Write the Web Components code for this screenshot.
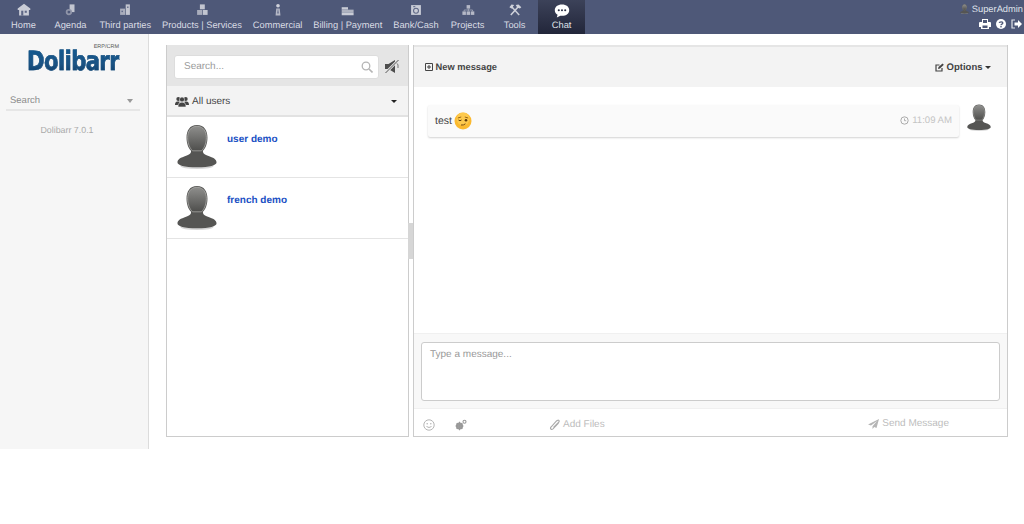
<!DOCTYPE html>
<html>
<head>
<meta charset="utf-8">
<title>Dolibarr chat</title>
<style>
  html, body { margin: 0; padding: 0; background: #fff; }
  body { font-family: "Liberation Sans", Arial, sans-serif; text-rendering: geometricPrecision; }
</style>
</head>
<body>
<dol-app></dol-app>

<script>
const ICONS = {
  home: '<path d="M10 1 L19 8 V10 H17 V18 H3 V10 H1 V8 Z" fill="#c9ccd6"/><rect x="6" y="11" width="3" height="7" fill="#5d6685"/><rect x="11" y="11" width="3" height="3" fill="#5d6685"/>',
  agenda: '<rect x="8" y="2" width="7" height="11" fill="#c2c5d0"/><circle cx="7" cy="13" r="4.5" fill="#8f94a8"/><circle cx="7" cy="13" r="2" fill="#4e5878"/>',
  third: '<rect x="11" y="2" width="6" height="15" fill="#c2c5d0"/><rect x="3" y="8" width="7" height="9" fill="#a9adbc"/><rect x="13" y="5" width="2" height="2" fill="#5d6685"/><rect x="5" y="11" width="2" height="2" fill="#5d6685"/>',
  products: '<rect x="7" y="2" width="7" height="7" fill="#c2c5d0"/><rect x="3" y="10" width="7" height="7" fill="#a9adbc"/><rect x="11" y="10" width="7" height="7" fill="#c2c5d0"/>',
  commercial: '<circle cx="10" cy="4" r="2.600" fill="#d0d2db"/><path d="M7.500 8 H12.500 L13.500 18 H6.500 Z" fill="#b5b8c6"/><path d="M10 8 L11 14 L10 16 L9 14 Z" fill="#5d6685"/>',
  billing: '<rect x="1" y="6" width="9" height="3.500" fill="#c9ccd6"/><rect x="1" y="9.500" width="9" height="4" fill="#aeb2c0"/><rect x="1" y="13.500" width="9" height="4" fill="#c9ccd6"/><rect x="10" y="9.500" width="8" height="4" fill="#aeb2c0"/><rect x="10" y="13.500" width="8" height="4" fill="#c9ccd6"/>',
  bank: '<rect x="3" y="3" width="14" height="14" fill="#c9ccd6"/><circle cx="10" cy="11" r="3.500" fill="none" stroke="#5d6685" stroke-width="1.500"/><rect x="6" y="4.500" width="3" height="1.500" fill="#5d6685"/>',
  projects: '<rect x="8" y="3" width="5" height="5" fill="#b5b8c6"/><rect x="2" y="12" width="5" height="5" fill="#b5b8c6"/><rect x="8" y="12" width="5" height="5" fill="#b5b8c6"/><rect x="14" y="12" width="5" height="5" fill="#b5b8c6"/><path d="M4.500 12 V10 H16.500 V12 M10.500 8 V12" fill="none" stroke="#b5b8c6"/>',
  tools: '<path d="M5 5 L16 17" stroke="#c9ccd6" stroke-width="2.200"/><path d="M2 6 L5 2 L9 3 L7 5 L7 8 L5 8 Z" fill="#d0d2db"/><path d="M4 17 L15 5" stroke="#d0d2db" stroke-width="2.200"/><path d="M11 3 L15 2 L19 6 L17 8 L15 7 L13 6 Z" fill="#d0d2db"/>',
  chat: '<path d="M11 2 C5.500 2 2 5 2 9 C2 11.500 3.500 13.500 5.500 14.600 L4.500 18 L9 15.800 C9.700 15.900 10.300 16 11 16 C16.500 16 20 13 20 9 C20 5 16.500 2 11 2 Z" fill="#fff"/><circle cx="7" cy="9" r="1.300" fill="#2b3044"/><circle cx="11" cy="9" r="1.300" fill="#2b3044"/><circle cx="15" cy="9" r="1.300" fill="#2b3044"/>'
};

class DolAvatar extends HTMLElement {
  connectedCallback() {
    const size = Number(this.getAttribute('size') || 44);
    this.attachShadow({ mode: 'open' }).innerHTML = `
      <style>:host { display: block; line-height: 0; }</style>
      <svg width="${size}" height="${size * 50 / 44}" viewBox="0 0 44 50">
        <defs>
          <linearGradient id="h" x1="0" y1="0" x2="0" y2="1">
            <stop offset="0" stop-color="#8e8e8c"/><stop offset="1" stop-color="#4e4e4c"/>
          </linearGradient>
        </defs>
        <ellipse cx="22" cy="46.500" rx="18" ry="3" fill="#bbb" opacity=".6"/>
        <path d="M22 1 C30 1 33.500 7 33.500 15 C33.500 22 31 27 28.500 29.500 C28.500 32.500 30 33.500 34 35 C40 37 43.500 39 43.500 42 C43.500 45.500 36 47.500 22 47.500 C8 47.500 .5 45.500 .5 42 C.5 39 4 37 10 35 C14 33.500 15.500 32.500 15.500 29.500 C13 27 10.500 22 10.500 15 C10.500 7 14 1 22 1 Z" fill="#555553"/>
        <path d="M22 2.500 C29 2.500 32.300 8 32.300 15 C32.300 22 29.500 27 27 29.500 L17 29.500 C14.500 27 11.700 22 11.700 15 C11.700 8 15 2.500 22 2.500 Z" fill="url(#h)" stroke="#b0b0ae" stroke-width=".8"/>
      </svg>`;
  }
}
customElements.define('dol-avatar', DolAvatar);

class NavItem extends HTMLElement {
  connectedCallback() {
    const icon = ICONS[this.getAttribute('icon')];
    const active = this.hasAttribute('active');
    this.attachShadow({ mode: 'open' }).innerHTML = `
      <style>
        :host { display: flex; flex-direction: column; align-items: center; box-sizing: border-box;
                height: 34px; min-width: 47px; padding: 3px 5.440px 0; color: #dadce4; font-size: 9.300px; }
        :host([active]) { background: linear-gradient(#3c4259, #22263a); color: #dfe1e8; }
        svg { display: block; margin-bottom: ${active ? 0 : 2}px; }
        span { line-height: 13px; white-space: nowrap; }
      </style>
      <svg width="${active ? 18 : 14}" height="${active ? 16 : 14}" viewBox="0 0 ${active ? 22 : 20} 20">${icon}</svg>
      <span><slot></slot></span>`;
  }
}
customElements.define('nav-item', NavItem);

class DolTopbar extends HTMLElement {
  constructor() {
    super();
    this.attachShadow({ mode: 'open' }).innerHTML = `
      <style>
        :host { display: flex; justify-content: space-between; height: 34px; background: #4e5878;
                font-family: "Liberation Sans", Arial, sans-serif; }
        nav { display: flex; }
        .user { display: flex; flex-direction: column; align-items: flex-end; padding: 3px 1px 0 0; color: #dfe1e8; font-size: 9.300px; }
        .name { display: flex; align-items: center; gap: 3px; line-height: 13px; }
        .tools { display: flex; gap: 5px; margin-top: 3px; padding-right: 1px; }
        svg { display: block; }
      </style>
      <nav>
        <nav-item icon="home">Home</nav-item>
        <nav-item icon="agenda">Agenda</nav-item>
        <nav-item icon="third">Third parties</nav-item>
        <nav-item icon="products">Products | Services</nav-item>
        <nav-item icon="commercial">Commercial</nav-item>
        <nav-item icon="billing">Billing | Payment</nav-item>
        <nav-item icon="bank">Bank/Cash</nav-item>
        <nav-item icon="projects">Projects</nav-item>
        <nav-item icon="tools">Tools</nav-item>
        <nav-item icon="chat" active>Chat</nav-item>
      </nav>
      <div class="user">
        <div class="name"><dol-avatar size="9"></dol-avatar>SuperAdmin</div>
        <div class="tools">
          <svg width="12" height="10" viewBox="0 0 12 10"><path d="M3 0 H9 V3 H11 A1 1 0 0 1 12 4 V8 H10 V10 H2 V8 H0 V4 A1 1 0 0 1 1 3 H3 Z M4 1 V4 H8 V1 Z M3.500 6.500 V9 H8.500 V6.500 Z" fill="#fff" fill-rule="evenodd"/></svg>
          <svg width="10" height="10" viewBox="0 0 10 10"><circle cx="5" cy="5" r="5" fill="#fff"/><path d="M3.200 3.800 C3.400 2.500 6.800 2.300 6.800 4 C6.800 5.200 5 5 5 6.200" fill="none" stroke="#4e5878" stroke-width="1.300"/><rect x="4.300" y="7" width="1.400" height="1.400" fill="#4e5878"/></svg>
          <svg width="11" height="10" viewBox="0 0 11 10"><path d="M4 1 H1 V9 H4" fill="none" stroke="#dfe1e8" stroke-width="1.200"/><path d="M3.500 3.500 H7 V1 L11 5 L7 9 V6.500 H3.500 Z" fill="#fff"/></svg>
        </div>
      </div>`;
  }
}
customElements.define('dol-topbar', DolTopbar);

class DolSidebar extends HTMLElement {
  constructor() {
    super();
    this.attachShadow({ mode: 'open' }).innerHTML = `
      <style>
        :host { display: block; box-sizing: border-box; width: 149px; background: #f6f6f6; border-right: 1px solid #dcdcdc;
                padding-top: 15px; font-family: "Liberation Sans", Arial, sans-serif; }
        .logo { position: relative; width: 92px; height: 24px; margin-left: 27px; }
        .word { display: block; width: max-content; font: 700 26.500px/25px "DejaVu Sans", sans-serif; letter-spacing: -.8px; white-space: nowrap;
                transform-origin: left top; transform: scaleX(.8);
                background: linear-gradient(#12588f, #1b5384 60%, #0f3d68); -webkit-background-clip: text; background-clip: text; color: transparent;
                -webkit-text-stroke: .5px #17507f; }
        .erp { position: absolute; right: 0; top: -5px; font-size: 5.500px; color: #555; }
        .search { display: flex; justify-content: space-between; align-items: center; margin: 19px 8px 0 6px;
                  padding: 0 4px; height: 17px; border-bottom: 2px solid #e6e6e6; font-size: 9.500px; color: #8c8c8c; }
        .caret { width: 0; height: 0; border: 3px solid transparent; border-top: 4px solid #999; border-bottom: 0; margin-right: 3px; }
        .version { margin-top: 14px; text-align: center; font-size: 8.850px; line-height: 11px; color: #aaa; padding-right: 14px; }
      </style>
      <div class="logo"><span class="word">Dolibarr</span><span class="erp">ERP/CRM</span></div>
      <div class="search"><span>Search</span><i class="caret"></i></div>
      <div class="version">Dolibarr 7.0.1</div>`;
  }
}
customElements.define('dol-sidebar', DolSidebar);

class UserRow extends HTMLElement {
  connectedCallback() {
    this.attachShadow({ mode: 'open' }).innerHTML = `
      <style>
        :host { display: flex; box-sizing: border-box; height: 61px; padding: 7px 0 0 10px; border-bottom: 1px solid #e4e4e4; }
        span { margin: 9px 0 0 10px; font-size: 10px; font-weight: 700; line-height: 13px; color: #1a50c4; }
      </style>
      <dol-avatar size="40"></dol-avatar>
      <span><slot></slot></span>`;
  }
}
customElements.define('user-row', UserRow);

class UserPanel extends HTMLElement {
  constructor() {
    super();
    this.attachShadow({ mode: 'open' }).innerHTML = `
      <style>
        :host { display: block; box-sizing: border-box; width: 243px; border: 1px solid #ccc; border-top: 0; background: #fff;
                font-family: "Liberation Sans", Arial, sans-serif; }
        .top { display: flex; align-items: center; gap: 5px; height: 41px; box-sizing: border-box; padding: 2px 9px 0 7px; background: #e5e5e5; }
        .box { display: flex; align-items: center; justify-content: space-between; flex: 1; height: 24px; box-sizing: border-box;
               padding: 0 5px 0 9px; background: #fff; border: 1px solid #ddd; border-radius: 3px; font-size: 10px; color: #9a9a9a; }
        .filter { display: flex; align-items: center; justify-content: space-between; height: 31px; box-sizing: border-box;
                  padding: 2px 11px 0 8px; background: #f3f3f3; border-bottom: 2px solid #e2e2e2; font-size: 10px; color: #444; }
        .filter div { display: flex; align-items: center; gap: 3px; }
        .caret { width: 0; height: 0; border: 3px solid transparent; border-top: 3px solid #222; border-bottom: 0; }
        svg { display: block; }
      </style>
      <div class="top">
        <div class="box">Search...
          <svg width="12" height="12" viewBox="0 0 12 12"><circle cx="5" cy="5" r="3.800" fill="none" stroke="#b5b5b5" stroke-width="1.300"/><path d="M8 8 L11.500 11.500" stroke="#b5b5b5" stroke-width="1.600"/></svg>
        </div>
        <svg width="15" height="15" viewBox="0 0 15 15"><path d="M1 5 H4.500 L11 1 V14 L4.500 10 H1 Z" fill="#4d4d4d"/><path d="M12 4 L14 5.500 V9" fill="none" stroke="#777" stroke-width="1"/><path d="M1 14.500 L14.500 1" stroke="#e5e5e5" stroke-width="2.600"/><path d="M1.500 14 L14.500 1" stroke="#555" stroke-width="1"/></svg>
      </div>
      <div class="filter">
        <div>
          <svg width="14" height="11" viewBox="0 0 14 11"><circle cx="3.300" cy="3" r="2" fill="#444"/><circle cx="10.700" cy="3" r="2" fill="#444"/><path d="M0 9 C0 6 1.500 5.500 3 5.500 H4.500 V9 Z M14 9 C14 6 12.500 5.500 11 5.500 H9.500 V9 Z" fill="#444"/><circle cx="7" cy="3.500" r="2.500" fill="#444" stroke="#f3f3f3" stroke-width=".6"/><path d="M3 11 C3 7 5 6.200 7 6.200 C9 6.200 11 7 11 11 Z" fill="#444" stroke="#f3f3f3" stroke-width=".6"/></svg>
          All users
        </div>
        <i class="caret"></i>
      </div>
      <slot></slot>`;
  }
}
customElements.define('user-panel', UserPanel);

class ChatMessage extends HTMLElement {
  constructor() {
    super();
    this.attachShadow({ mode: 'open' }).innerHTML = `
      <style>
        :host { display: flex; align-items: flex-start; gap: 8px; padding: 17px 16px 0 14px; }
        .bubble { display: flex; justify-content: space-between; align-items: center; flex: 1; height: 32px; box-sizing: border-box;
                  padding: 0 7px 0 7px; margin-top: 1px; background: #fafafa; border-radius: 2px; box-shadow: 0 1px 2px rgba(0,0,0,.18); }
        .text { display: flex; align-items: center; gap: 2px; font-size: 10.500px; color: #444; }
        .time { display: flex; align-items: center; gap: 3px; font-size: 9.600px; color: #c4c4c4; margin-top: -2px; }
        svg { display: block; }
      </style>
      <div class="bubble">
        <div class="text"><slot></slot>
          <svg width="18" height="18" viewBox="0 0 18 18">
            <circle cx="9" cy="9" r="8.500" fill="#fbb92f"/><circle cx="9" cy="7" r="6.500" fill="#fdd05a" opacity=".7"/>
            <path d="M3.800 6 L7.200 5 M10.800 5 L14.200 6" stroke="#8a5a12" stroke-width=".9"/>
            <path d="M4.500 8 Q6 9.500 7.500 8" fill="none" stroke="#5e3c0c" stroke-width="1"/>
            <circle cx="12" cy="8.300" r="1.300" fill="#5e3c0c"/>
            <path d="M7 13 Q9.500 13.500 11.500 11.800" fill="none" stroke="#7a4c10" stroke-width="1"/>
          </svg>
        </div>
        <div class="time">
          <svg width="9" height="9" viewBox="0 0 9 9"><circle cx="4.500" cy="4.500" r="3.700" fill="none" stroke="#aaa" stroke-width="1"/><path d="M4.500 2.500 V4.700 H6.200" fill="none" stroke="#aaa" stroke-width=".9"/></svg>
          11:09 AM
        </div>
      </div>
      <dol-avatar size="24"></dol-avatar>`;
  }
}
customElements.define('chat-message', ChatMessage);

class ChatPanel extends HTMLElement {
  constructor() {
    super();
    this.attachShadow({ mode: 'open' }).innerHTML = `
      <style>
        :host { display: flex; flex-direction: column; box-sizing: border-box; width: 595px; border: 1px solid #ccc; border-top: 0; background: #fff;
                font-family: "Liberation Sans", Arial, sans-serif; }
        .head { display: flex; align-items: center; justify-content: space-between; height: 42px; box-sizing: border-box; padding: 0 16px 0 11px;
                background: #f3f3f3; border-top: 2px solid #e5e5e5; font-size: 9.300px; font-weight: 700; color: #444; }
        .head div { display: flex; align-items: center; gap: 2.500px; }
        .head .opt { font-size: 9.500px; }
        .caret { width: 0; height: 0; border: 3px solid transparent; border-top: 3px solid #333; border-bottom: 0; margin-left: 0; }
        .body { flex: 1; }
        .compose { height: 76px; box-sizing: border-box; padding: 8px 7px 7px; background: #f8f8f8; border-top: 1px solid #f0f0f0; border-bottom: 1px solid #f0f0f0; }
        .input { height: 59px; box-sizing: border-box; padding: 5px 9px 5px 8px; background: #fff; border: 1px solid #ccc; border-radius: 3px; font-size: 10px; line-height: 13px; color: #999; }
        .foot { display: flex; align-items: center; height: 27px; box-sizing: border-box; padding-top: 4px; font-size: 10px; color: #bdbdbd; }
        .foot > * { display: flex; align-items: center; gap: 3px; flex: none; }
        svg { display: block; }
      </style>
      <div class="head">
        <div>
          <svg width="8" height="8" viewBox="0 0 8 8"><path d="M.500 .500 H7.500 V7.500 H.500 Z M4 2 V6 M2 4 H6" fill="none" stroke="#444"/></svg>
          New message
        </div>
        <div class="opt">
          <svg width="9" height="9" viewBox="0 0 9 9"><path d="M7 5 V8 H1 V2 H4.500" fill="none" stroke="#444" stroke-width="1.200"/><path d="M3 6 L3.500 4 L7.500 .500 L8.800 1.800 L5 5.500 Z" fill="#444"/></svg>
          Options <i class="caret"></i>
        </div>
      </div>
      <div class="body"><slot></slot></div>
      <div class="compose"><div class="input">Type a message...</div></div>
      <div class="foot">
        <span style="margin-left:9px"><svg width="12" height="12" viewBox="0 0 12 12"><circle cx="6" cy="6" r="5.200" fill="none" stroke="#b5b5b5"/><circle cx="4.200" cy="4.800" r=".8" fill="#b5b5b5"/><circle cx="7.800" cy="4.800" r=".8" fill="#b5b5b5"/><path d="M3.500 7.500 Q6 9.500 8.500 7.500" fill="none" stroke="#b5b5b5"/></svg></span>
        <span style="margin-left:20px"><svg width="12" height="12" viewBox="0 0 12 12"><circle cx="4.500" cy="7" r="2.600" fill="none" stroke="#999" stroke-width="2"/><path d="M4.500 2.800 V11.200 M.5 7 H8.500 M1.700 4.200 L7.300 9.800 M7.300 4.200 L1.700 9.800" stroke="#999" stroke-width="1.100"/><circle cx="9.500" cy="2.800" r="1.500" fill="none" stroke="#999" stroke-width="1.100"/></svg></span>
        <span style="margin-left:82px"><svg width="11" height="12" viewBox="0 0 11 12"><path d="M9.500 4 L4 9.800 C2.500 11.300 .5 9.500 2 8 L7.500 2 C9.500 0 11 2 9.500 3.500 L4.500 8.500" fill="none" stroke="#aaa" stroke-width="1.100"/></svg>Add Files</span>
        <span style="margin-left:auto;margin-right:58px;margin-top:-2px"><svg width="11" height="10" viewBox="0 0 11 10"><path d="M11 0 L0 5.500 L3 6.500 L9 2 L4.500 7.200 L4.500 10 L6.200 8 L8.500 9 Z" fill="#b5b5b5"/></svg>Send Message</span>
      </div>`;
  }
}
customElements.define('chat-panel', ChatPanel);

class DolApp extends HTMLElement {
  constructor() {
    super();
    this.attachShadow({ mode: 'open' }).innerHTML = `
      <style>
        :host { display: block; }
        .main { display: flex; height: 415px; }
        .content { display: flex; height: 392px; margin: 11px 0 0 17px; gap: 4px; }
        .split { position: absolute; left: 408px; top: 223px; width: 5px; height: 36px; background: #d6d6d6; }
      </style>
      <dol-topbar></dol-topbar>
      <div class="main">
        <dol-sidebar></dol-sidebar>
        <div class="content">
          <user-panel>
            <user-row>user demo</user-row>
            <user-row>french demo</user-row>
          </user-panel>
          <chat-panel>
            <chat-message>test</chat-message>
          </chat-panel>
        </div>
      </div>
      <div class="split"></div>`;
  }
}
customElements.define('dol-app', DolApp);
</script>
</body>
</html>
